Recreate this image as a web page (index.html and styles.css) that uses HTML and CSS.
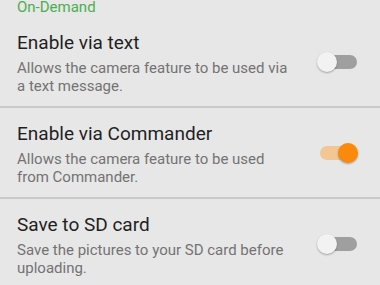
FILE: index.html
```html
<!DOCTYPE html>
<html lang="en">
<head>
    <meta charset="UTF-8">
    <title>Camera settings</title>
    <link rel="stylesheet" href="styles.css">
</head>
<body>
<div class="screen">
    <div class="category">On-Demand</div>

    <div class="pref">
        <div class="pref-text">
            <div class="pref-title">Enable via text</div>
            <div class="pref-summary">Allows the camera feature to be used via a text message.</div>
        </div>
        <span class="switch"><i class="track"></i><i class="thumb"></i></span>
    </div>

    <div class="pref">
        <div class="pref-text">
            <div class="pref-title">Enable via Commander</div>
            <div class="pref-summary">Allows the camera feature to be used from Commander.</div>
        </div>
        <span class="switch on"><i class="track"></i><i class="thumb"></i></span>
    </div>

    <div class="pref">
        <div class="pref-text">
            <div class="pref-title">Save to SD card</div>
            <div class="pref-summary">Save the pictures to your SD card before uploading.</div>
        </div>
        <span class="switch"><i class="track"></i><i class="thumb"></i></span>
    </div>
</div>
</body>
</html>
```

FILE: styles.css
```css
* {
    margin: 0;
    padding: 0;
}

body {
    background-color: #e7e7e7;
    font-family: Roboto, "Noto Sans", sans-serif;
}

.screen {
    width: 380px;
    height: 285px;
    overflow: hidden;
}

.category {
    padding-left: 17px;
    font-size: 15px;
    line-height: 14px;
    height: 14px;
    color: #4cae4f;
}

.pref {
    display: flex;
    align-items: center;
    padding: 17px 22px 11px 17px;
    border-bottom: 2px solid #c9c9c9;
}

.pref + .pref {
    padding-top: 14px;
}

.pref-text {
    width: 277px;
    margin-right: 24px;
}

.pref-title {
    font-size: 19px;
    line-height: 24px;
    color: #1f1f1f;
}

.pref-summary {
    margin-top: 4px;
    font-size: 15px;
    line-height: 18px;
    color: #737373;
}

.switch {
    position: relative;
    width: 41px;
    height: 20px;
    margin-bottom: 3px;
}

.switch i {
    position: absolute;
    display: block;
}

.track {
    left: 3px;
    top: 3px;
    width: 37px;
    height: 14px;
    border-radius: 7px;
    background-color: #9f9f9f;
}

.thumb {
    left: 0;
    top: 0;
    width: 20px;
    height: 20px;
    border-radius: 50%;
    background-color: #f2f2f2;
    box-shadow: 0 1px 2px rgba(0, 0, 0, .3);
}

.switch.on .track {
    background-color: #f2c794;
}

.switch.on .thumb {
    left: 21px;
    background-color: #fb8a0c;
}
```
